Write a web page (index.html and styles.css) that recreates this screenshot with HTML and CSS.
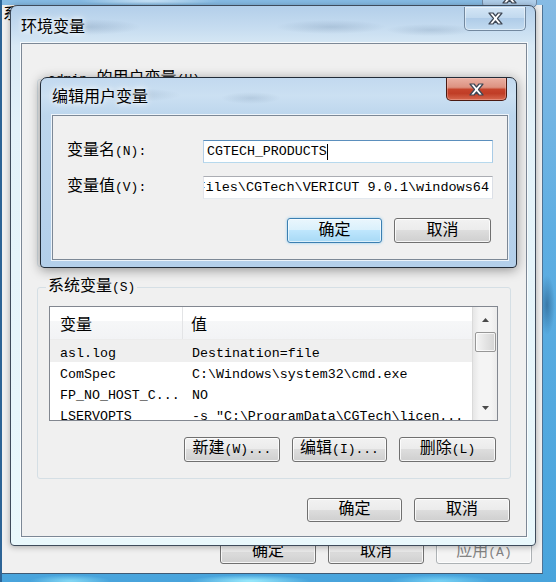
FILE: index.html
```html
<!DOCTYPE html>
<html>
<head>
  <meta charset="utf-8">
  <title>环境变量</title>
  <link rel="stylesheet" href="styles.css">
</head>
<body>
  <div class="sys">
    <div class="sys-close">
      <svg class="x" width="15" height="13" viewBox="-1 -1 15 13"><polygon points="0,0 4,0 6.5,3 9,0 13,0 8.5,5.5 13,11 9,11 6.5,8 4,11 0,11 4.5,5.5"/></svg>
    </div>
    <div class="sys-client">
      <span class="sys-tab">系统</span>
      <div class="sys-actions">
        <button class="btn w96">确定</button>
        <button class="btn w96">取消</button>
        <button class="btn w96" disabled>应用<span class="en">(A)</span></button>
      </div>
    </div>

    <!-- 环境变量 -->
    <div class="win env">
      <div class="titlebar">
        <span class="title">环境变量</span>
        <div class="close">
          <svg class="x" width="15" height="13" viewBox="-1 -1 15 13"><polygon points="0,0 4,0 6.5,3 9,0 13,0 8.5,5.5 13,11 9,11 6.5,8 4,11 0,11 4.5,5.5"/></svg>
        </div>
      </div>
      <div class="client">
        <fieldset class="group user-group">
          <legend><span class="en">admin</span> 的用户变量<span class="en">(U)</span></legend>
          <div class="spacer"></div>
        </fieldset>

        <fieldset class="group sys-group">
          <legend>系统变量<span class="en">(S)</span></legend>
          <div class="list">
            <div class="list-main">
              <div class="list-head">
                <span class="c1">变量</span>
                <span class="c2">值</span>
              </div>
              <div class="list-row sel"><span class="c1">asl.log</span><span class="c2">Destination=file</span></div>
              <div class="list-row"><span class="c1">ComSpec</span><span class="c2">C:\Windows\system32\cmd.exe</span></div>
              <div class="list-row"><span class="c1">FP_NO_HOST_C...</span><span class="c2">NO</span></div>
              <div class="list-row"><span class="c1">LSERVOPTS</span><span class="c2">-s "C:\ProgramData\CGTech\licen...</span></div>
            </div>
            <div class="vscroll">
              <div class="arrow"><svg width="7" height="4" viewBox="0 0 7 4"><polygon points="0,4 3.5,0 7,4"/></svg></div>
              <div class="thumb"></div>
              <div class="track"></div>
              <div class="arrow"><svg width="7" height="4" viewBox="0 0 7 4"><polygon points="0,0 7,0 3.5,4"/></svg></div>
            </div>
          </div>
          <div class="group-actions">
            <button class="btn h25 w96">新建<span class="en">(W)...</span></button>
            <button class="btn h25 w95">编辑<span class="en">(I)...</span></button>
            <button class="btn h25 w97">删除<span class="en">(L)</span></button>
          </div>
        </fieldset>

        <div class="env-actions">
          <button class="btn w95">确定</button>
          <button class="btn w96">取消</button>
        </div>
      </div>
    </div>

    <!-- 编辑用户变量 -->
    <div class="win edit">
      <div class="titlebar">
        <span class="title">编辑用户变量</span>
        <div class="close red">
          <svg class="x" width="15" height="13" viewBox="-1 -1 15 13"><polygon points="0,0 4,0 6.5,3 9,0 13,0 8.5,5.5 13,11 9,11 6.5,8 4,11 0,11 4.5,5.5"/></svg>
        </div>
      </div>
      <div class="client">
        <div class="form">
          <label>变量名<span class="en">(N):</span></label>
          <div class="field focus"><span>CGTECH_PRODUCTS</span><i class="caret"></i></div>
          <label>变量值<span class="en">(V):</span></label>
          <div class="field scrolled"><span>C:\Program Files\CGTech\VERICUT 9.0.1\windows64</span></div>
        </div>
        <div class="actions">
          <button class="btn h25 w95 default">确定</button>
          <button class="btn h25 w97">取消</button>
        </div>
      </div>
    </div>
  </div>
</body>
</html>
```

FILE: styles.css
```css
* {
  box-sizing: border-box;
}

html, body {
  margin: 0;
  padding: 0;
}

body {
  width: 556px;
  height: 582px;
  overflow: hidden;
  font-family: "Liberation Mono", "Noto Sans CJK SC", monospace;
  font-size: 16px;
  color: #000;
  background: #5aa8dc;
}

button {
  font: inherit;
  color: inherit;
}

.en {
  font-size: 13px;
}

/* background window */
.sys {
  position: relative;
  width: 556px;
  height: 582px;
  padding: 5px 13px 8px 2px;
  background:
    radial-gradient(ellipse 8px 30px at 547px 305px, rgba(20, 60, 100, 0.45), transparent),
    radial-gradient(ellipse 60px 6px at 250px 581px, rgba(160, 240, 255, 0.95), transparent),
    radial-gradient(ellipse 40px 6px at 70px 581px, rgba(160, 240, 255, 0.7), transparent),
    radial-gradient(ellipse 50px 6px at 440px 581px, rgba(140, 230, 255, 0.7), transparent),
    radial-gradient(ellipse 70px 4px at 150px 1px, rgba(220, 240, 255, 0.8), transparent),
    linear-gradient(90deg, #2d6496 0, #2d6496 2px, transparent 2px),
    linear-gradient(180deg, #86bbe4 0, #5eaee2 40%, #48a4dc 100%);
}

.sys-close {
  position: absolute;
  top: -14px;
  right: 19px;
  width: 55px;
  height: 22px;
  display: flex;
  align-items: flex-end;
  justify-content: center;
  padding-bottom: 3px;
  border: 1px solid #6f88a3;
  border-radius: 0 0 5px 5px;
  background: linear-gradient(180deg, #c4dcf1, #a9c9e7);
}

.sys-client {
  height: 100%;
  display: flex;
  flex-direction: column;
  justify-content: space-between;
  padding: 2px 10px 9px 1px;
  background: #f0f0f0;
  border-right: 1px solid #4f7496;
  border-bottom: 1px solid #3f5a74;
}

.sys-tab {
  line-height: 16px;
}

.sys-actions {
  display: flex;
  justify-content: flex-end;
  gap: 12px;
}

/* windows */
.win {
  position: absolute;
  display: flex;
  flex-direction: column;
  border: 1px solid #3e4b5b;
  border-radius: 7px 7px 4px 4px;
}

.titlebar {
  display: flex;
  justify-content: space-between;
  align-items: flex-start;
  flex-shrink: 0;
  height: 37px;
}

.title {
  align-self: center;
  font-family: "Noto Sans CJK SC", sans-serif;
  font-size: 16px;
  line-height: 20px;
  text-shadow: 0 0 5px #fff, 0 0 9px rgba(255, 255, 255, 0.9);
}

.close {
  width: 62px;
  height: 24px;
  margin-top: 1px;
  display: flex;
  align-items: center;
  justify-content: center;
  border: 1px solid #72889f;
  border-top: none;
  border-radius: 0 0 5px 5px;
  background: linear-gradient(180deg, #d4e6f6 0, #c0d8ee 50%, #afcce8 50%, #c3dbf0 100%);
  box-shadow: inset 0 0 0 1px rgba(255, 255, 255, 0.45);
}

.close.red {
  width: 61px;
  height: 23px;
  margin-top: 0;
  border-color: #4a1a12;
  background: linear-gradient(180deg, #eab0a3 0, #dd9281 42%, #c6442c 52%, #c03d26 70%, #d7684f 100%);
  box-shadow: inset 0 0 0 1px rgba(255, 210, 200, 0.35);
}

.x polygon {
  fill: #fff;
  stroke: #3d4654;
  stroke-width: 1.2;
  stroke-linejoin: round;
}

.client {
  flex: 1;
  min-height: 0;
  background: #f0f0f0;
  border: 1px solid #7c8896;
  box-shadow: 0 0 0 1px rgba(255, 255, 255, 0.75);
}

/* 环境变量 */
.env {
  left: 10px;
  top: 5px;
  width: 526px;
  height: 541px;
  background:
    radial-gradient(ellipse 55px 8px at 75px 21px, rgba(70, 100, 135, 0.22), transparent),
    radial-gradient(ellipse 55px 7px at 320px 21px, rgba(70, 100, 135, 0.2), transparent),
    radial-gradient(ellipse 45px 6px at 420px 24px, rgba(70, 100, 135, 0.18), transparent),
    linear-gradient(180deg, #b3cfea 0, #c6dcf0 22px, #d8e9f5 40px, #e3f2f9 120px, #e9f8fc 100%);
  box-shadow: 0 1px 6px rgba(0, 0, 0, 0.3);
}

.env .titlebar {
  padding: 0 9px 0 10px;
}

.env .client {
  margin: 0 8px 8px 10px;
  padding: 0 15px;
  display: flex;
  flex-direction: column;
}

.group {
  margin: 0;
  min-width: 0;
  padding: 10px 12px 16px 11px;
  border: 1px solid #d5dfe5;
  border-radius: 3px;
}

.group legend {
  margin-left: -3px;
  padding: 0 2px;
  line-height: 16px;
}

.user-group {
  margin-top: 27px;
}

.user-group .spacer {
  height: 152px;
}

.sys-group {
  margin-top: 12px;
}

.list {
  display: flex;
  height: 115px;
  border: 1px solid #828790;
  background: #fff;
  overflow: hidden;
}

.list-main {
  flex: 1;
  min-width: 0;
  overflow: hidden;
}

.list-head {
  display: flex;
  height: 33px;
  background: linear-gradient(180deg, #fff 0, #fff 45%, #f6f7f8 45%, #f2f3f5 100%);
  border-bottom: 1px solid #ececec;
}

.list-head span {
  display: flex;
  align-items: center;
  padding-top: 6px;
  line-height: 16px;
}

.list-head .c1 {
  width: 133px;
  padding-left: 10px;
  border-right: 1px solid #e3e4e6;
}

.list-head .c2 {
  padding-left: 8px;
}

.list-row {
  display: flex;
  height: 21px;
  padding-top: 4px;
  line-height: 17px;
  font-size: 13.3px;
  white-space: pre;
}

.list-row.sel {
  height: 22px;
  padding-top: 5px;
  background: #efefef;
}

.list-row .c1 {
  width: 133px;
  flex-shrink: 0;
  padding-left: 10px;
}

.list-row .c2 {
  padding-left: 9px;
}

.vscroll {
  width: 25px;
  flex-shrink: 0;
  display: flex;
  flex-direction: column;
  align-items: center;
  border-left: 1px solid #dadada;
  background: linear-gradient(90deg, #e6e6e6 0, #f4f4f4 25%, #f4f4f4 75%, #ebebeb 100%);
}

.vscroll .arrow {
  height: 25px;
  display: flex;
  align-items: center;
  justify-content: center;
}

.vscroll .arrow polygon {
  fill: #4a4a4a;
}

.vscroll .thumb {
  width: 21px;
  height: 20px;
  border: 1px solid #979797;
  border-radius: 2px;
  background: linear-gradient(90deg, #f4f4f4, #e4e4e4 50%, #d4d4d4);
  box-shadow: inset 0 0 0 1px rgba(255, 255, 255, 0.7);
}

.vscroll .track {
  flex: 1;
}

.group-actions {
  display: flex;
  justify-content: flex-end;
  gap: 12px;
  margin-top: 16px;
  padding-right: 2px;
}

.env-actions {
  display: flex;
  justify-content: flex-end;
  gap: 12px;
  margin-top: 19px;
  padding-right: 1px;
}

/* 编辑用户变量 */
.edit {
  left: 40px;
  top: 77px;
  width: 477px;
  height: 191px;
  border-color: #222c38;
  background:
    radial-gradient(ellipse 50px 7px at 90px 17px, rgba(60, 90, 125, 0.18), transparent),
    radial-gradient(ellipse 30px 6px at 210px 20px, rgba(60, 90, 125, 0.15), transparent),
    linear-gradient(180deg, #c2d9ef 0, #cbe0f2 18px, #bdd6ed 37px, #b3cfea 100%);
  box-shadow: 0 2px 12px rgba(0, 0, 0, 0.4);
}

.edit .titlebar {
  padding: 0 9px 3px 11px;
}

.edit .client {
  margin: 0 8px 7px 11px;
  padding: 24px 0 0 14px;
}

.form {
  display: grid;
  grid-template-columns: 136px 290px;
  grid-auto-rows: 23px;
  row-gap: 13px;
  align-items: center;
}

.form label {
  line-height: 16px;
}

.field {
  height: 23px;
  display: flex;
  align-items: center;
  padding: 0 3px;
  overflow: hidden;
  white-space: pre;
  font-size: 13.3px;
  background: #fff;
  border: 1px solid;
  border-color: #abadb3 #dbdfe6 #e3e9ef #e2e3ea;
}

.field.focus {
  border-color: #5b8fbd #a9cbe6 #b7d9ed #b5cfe7;
}

.field span {
  flex-shrink: 0;
}

.field.scrolled {
  justify-content: flex-end;
  padding-right: 3px;
  font-size: 13.5px;
}

.caret {
  width: 1px;
  height: 16px;
  flex-shrink: 0;
  background: #000;
}

.actions {
  display: flex;
  justify-content: flex-end;
  gap: 12px;
  margin-top: 19px;
  padding-right: 16px;
}

/* buttons */
.btn {
  height: 24px;
  padding: 0;
  line-height: 20px;
  border: 1px solid #707070;
  border-radius: 3px;
  background: linear-gradient(180deg, #f2f2f2 0, #ebebeb 50%, #dddddd 50%, #cfcfcf 100%);
  box-shadow: inset 0 0 0 1px rgba(255, 255, 255, 0.8);
}

.btn.h25 {
  height: 25px;
}

.btn.w95 { width: 95px; }
.btn.w96 { width: 96px; }
.btn.w97 { width: 97px; }

.btn.default {
  border-color: #3c7fb1;
  background: linear-gradient(180deg, #eaf6fd 0, #d9f0fc 50%, #bee6fd 50%, #a7d9f5 100%);
  box-shadow: inset 0 0 0 1px rgba(255, 255, 255, 0.6), 0 0 3px #8ecbf0;
}

.btn:disabled {
  border-color: #adb2b5;
  background: #f4f4f4;
  color: #838383;
}
```
